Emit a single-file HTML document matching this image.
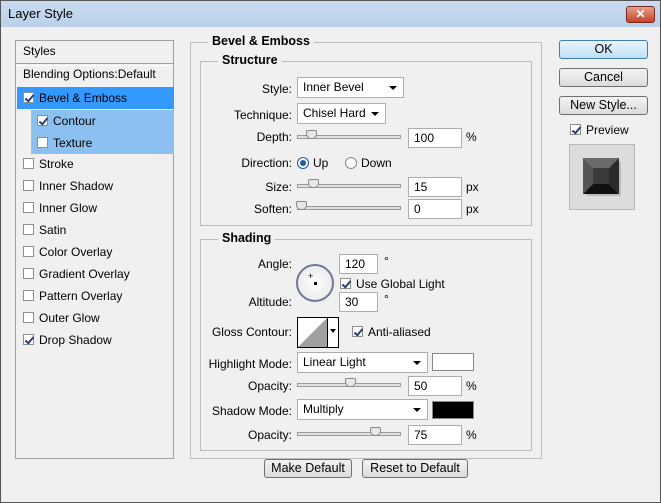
<!DOCTYPE html><html><head><style>
*{box-sizing:border-box}
body{margin:0;width:661px;height:503px;overflow:hidden;font:12px "Liberation Sans",sans-serif;color:#000;background:#f0f0f0;position:relative}
.a{position:absolute}
.title{left:0;top:0;width:661px;height:28px;background:linear-gradient(#c9dbef,#b9d0ea);border:1px solid #555;border-bottom:none}
.win{left:0;top:27px;width:661px;height:476px;border:1px solid #555;border-top:none;background:#f0f0f0}
.list{left:15px;top:40px;width:159px;height:419px;border:1px solid #a0a0a0;background:#f0f0f0}
.it{position:absolute;left:1px;width:157px;height:22px;line-height:22px;padding-left:6px}
.cb{display:inline-block;width:11px;height:11px;border:1px solid #8f8f8f;background:#fff;vertical-align:-1px;margin-right:5px;position:relative}
.cb.c::after{content:"";position:absolute;left:3px;top:0px;width:3px;height:7px;border:solid #2a3f7a;border-width:0 2px 2px 0;transform:rotate(40deg)}
.grp{border:1px solid #bcbcbc}
.gt{position:absolute;background:#f0f0f0;font-weight:bold;font-size:12.5px;padding:0 4px}
.lbl{position:absolute;text-align:right;width:120px}
.inp{position:absolute;background:#fff;border:1px solid #abadb3;height:20px;line-height:18px;padding-left:5px}
.dd{position:absolute;background:#fff;border:1px solid #abadb3;height:21px;line-height:19px;padding-left:5px}
.dd::after{content:"";position:absolute;right:6px;top:8px;border:4px solid transparent;border-top:4px solid #000;border-bottom:none}
.sl{position:absolute;height:4px;border:1px solid #9a9a9a;background:#e0e0e0;width:104px}
.th{position:absolute;top:-6px;width:11px;height:9px;background:#e8e8e8;border:1px solid #888;border-radius:2px 2px 5px 5px}
.btn{position:absolute;border:1px solid #707070;border-radius:3px;background:linear-gradient(#f2f2f2,#dcdcdc);text-align:center;line-height:17px;height:19px;font-size:12.5px}
.rad{display:inline-block;width:12px;height:12px;border-radius:50%;border:1px solid #888;background:#fff;vertical-align:-2px;margin-right:4px;position:relative}
</style></head><body>
<div class="a title"><span class="a" style="left:7px;top:5px;font-size:13px">Layer Style</span>
<div class="a" style="left:625px;top:5px;width:29px;height:17px;background:linear-gradient(#e6a08e,#c6432b);border:1px solid #7a2a1c;border-radius:3px;color:#fff;text-align:center;font-weight:bold;line-height:15px">✕</div></div>
<div class="a win"></div>
<div class="a list">
<div class="it" style="top:0;height:22px;line-height:16px;top:2px">Styles</div>
<div class="a" style="left:0;top:22px;width:157px;border-top:1px solid #a0a0a0;border-bottom:1px solid #fff;height:3px"></div>
<div class="it" style="top:22px">Blending Options:Default</div>
<div class="it" style="top:46px;background:#3399ff"><span class="cb c"></span>Bevel &amp; Emboss</div>
<div class="it" style="top:69px;left:15px;width:143px;background:#8cc0f0;padding-left:6px"><span class="cb c"></span>Contour</div>
<div class="it" style="top:91px;left:15px;width:143px;background:#8cc0f0;padding-left:6px"><span class="cb"></span>Texture</div>
<div class="it" style="top:112px"><span class="cb"></span>Stroke</div>
<div class="it" style="top:134px"><span class="cb"></span>Inner Shadow</div>
<div class="it" style="top:156px"><span class="cb"></span>Inner Glow</div>
<div class="it" style="top:178px"><span class="cb"></span>Satin</div>
<div class="it" style="top:200px"><span class="cb"></span>Color Overlay</div>
<div class="it" style="top:222px"><span class="cb"></span>Gradient Overlay</div>
<div class="it" style="top:244px"><span class="cb"></span>Pattern Overlay</div>
<div class="it" style="top:266px"><span class="cb"></span>Outer Glow</div>
<div class="it" style="top:288px"><span class="cb c"></span>Drop Shadow</div>
</div>
<div class="a grp" style="left:190px;top:42px;width:352px;height:417px"></div>
<div class="gt" style="left:208px;top:34px">Bevel &amp; Emboss</div>
<div class="a grp" style="left:200px;top:61px;width:332px;height:165px"></div>
<div class="gt" style="left:218px;top:53px">Structure</div>
<div class="lbl" style="left:172px;top:82px">Style:</div><div class="dd" style="left:297px;top:77px;width:107px">Inner Bevel</div>
<div class="lbl" style="left:172px;top:108px">Technique:</div><div class="dd" style="left:297px;top:103px;width:89px">Chisel Hard</div>
<div class="lbl" style="left:172px;top:130px">Depth:</div><div class="sl" style="left:297px;top:135px"><div class="th" style="left:8px"></div></div><div class="inp" style="left:408px;top:128px;width:54px">100</div><span class="a" style="left:466px;top:130px">%</span>
<div class="lbl" style="left:172px;top:156px">Direction:</div>
<span class="a" style="left:297px;top:156px"><span class="rad" style="border-color:#2a5a8a;background:radial-gradient(#1f5f9f 2.5px,#fff 3.5px)"></span>Up</span>
<span class="a" style="left:345px;top:156px"><span class="rad"></span>Down</span>
<div class="lbl" style="left:172px;top:180px">Size:</div><div class="sl" style="left:297px;top:184px"><div class="th" style="left:10px"></div></div><div class="inp" style="left:408px;top:177px;width:54px">15</div><span class="a" style="left:466px;top:180px">px</span>
<div class="lbl" style="left:172px;top:202px">Soften:</div><div class="sl" style="left:297px;top:206px"><div class="th" style="left:-2px"></div></div><div class="inp" style="left:408px;top:199px;width:54px">0</div><span class="a" style="left:466px;top:202px">px</span>
<div class="a grp" style="left:200px;top:239px;width:332px;height:212px"></div>
<div class="gt" style="left:218px;top:231px">Shading</div>
<div class="lbl" style="left:172px;top:257px">Angle:</div>
<div class="a" style="left:296px;top:264px;width:38px;height:38px;border-radius:50%;border:2px solid #6a7a9a;background:radial-gradient(#fff,#e4e4e4)"><div class="a" style="left:16px;top:16px;width:3px;height:3px;background:#000"></div><div class="a" style="left:10px;top:5px;font-size:9px">+</div></div>
<div class="inp" style="left:339px;top:254px;width:39px">120</div><span class="a" style="left:384px;top:254px">°</span>
<span class="a" style="left:340px;top:277px"><span class="cb c"></span>Use Global Light</span>
<div class="lbl" style="left:172px;top:295px">Altitude:</div>
<div class="inp" style="left:339px;top:292px;width:39px">30</div><span class="a" style="left:384px;top:292px">°</span>
<div class="lbl" style="left:172px;top:325px">Gloss Contour:</div>
<div class="a" style="left:297px;top:317px;width:42px;height:31px;border:1px solid #000;background:#fff"><svg width="30" height="29" class="a" style="left:0;top:0"><polygon points="0,29 29,0 29,29" fill="#a0a0a0"/></svg><div class="a" style="left:29px;top:0;width:1px;height:29px;background:#000"></div><div class="a" style="left:32px;top:11px;border:3px solid transparent;border-top:4px solid #000;border-bottom:none"></div></div>
<span class="a" style="left:352px;top:325px"><span class="cb c"></span>Anti-aliased</span>
<div class="lbl" style="left:172px;top:357px">Highlight Mode:</div><div class="dd" style="left:297px;top:352px;width:131px">Linear Light</div>
<div class="a" style="left:432px;top:353px;width:42px;height:18px;border:1px solid #888;background:#fff"></div>
<div class="lbl" style="left:172px;top:379px">Opacity:</div><div class="sl" style="left:297px;top:383px"><div class="th" style="left:47px"></div></div><div class="inp" style="left:408px;top:376px;width:54px">50</div><span class="a" style="left:466px;top:379px">%</span>
<div class="lbl" style="left:172px;top:404px">Shadow Mode:</div><div class="dd" style="left:297px;top:399px;width:131px">Multiply</div>
<div class="a" style="left:432px;top:401px;width:42px;height:18px;border:1px solid #888;background:#000"></div>
<div class="lbl" style="left:172px;top:428px">Opacity:</div><div class="sl" style="left:297px;top:432px"><div class="th" style="left:72px"></div></div><div class="inp" style="left:408px;top:425px;width:54px">75</div><span class="a" style="left:466px;top:428px">%</span>
<div class="btn" style="left:264px;top:459px;width:88px">Make Default</div>
<div class="btn" style="left:362px;top:459px;width:106px">Reset to Default</div>
<div class="btn" style="left:559px;top:40px;width:89px;border-color:#3c7fb1;background:linear-gradient(#e8f4fc,#bfe0f5)">OK</div>
<div class="btn" style="left:559px;top:68px;width:89px">Cancel</div>
<div class="btn" style="left:559px;top:96px;width:89px">New Style...</div>
<span class="a" style="left:570px;top:123px"><span class="cb c"></span>Preview</span>
<div class="a" style="left:569px;top:144px;width:66px;height:66px;border:1px solid #b8b8b8;background:#dcdcdc">
<svg width="40" height="40" class="a" style="left:13px;top:13px"><rect x="4" y="4" width="34" height="34" fill="#999" opacity=".5"/><polygon points="0,0 36,0 26,10 10,10" fill="#6a6a6a"/><polygon points="0,0 10,10 10,26 0,36" fill="#555"/><polygon points="36,0 36,36 26,26 26,10" fill="#2a2a2a"/><polygon points="0,36 10,26 26,26 36,36" fill="#111"/><rect x="10" y="10" width="16" height="16" fill="#3a3a3a"/></svg></div>
</body></html>
